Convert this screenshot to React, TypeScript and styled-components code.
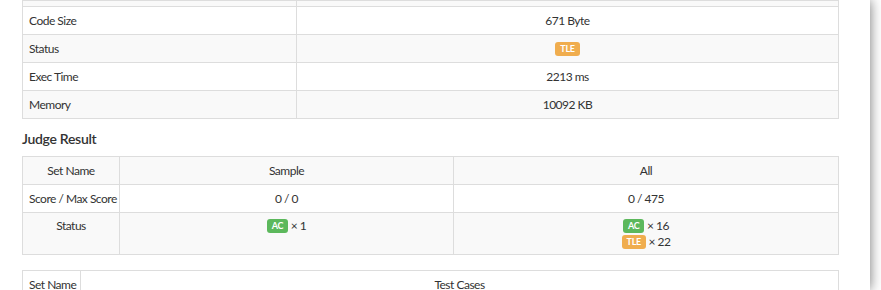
import React from "react"
import styled, { createGlobalStyle } from "styled-components"

const GlobalStyle = createGlobalStyle`
    html, body {
        margin: 0;
        padding: 0;
        background: #fff;
        overflow: hidden;
    }
    body {
        font-family: 'Lato', 'Noto Sans', sans-serif;
        font-size: 12px;
        letter-spacing: -0.5px;
        color: #333;
    }
`

const Page = styled.div`
    width: 870px;
    height: 290px;
    background: #fff;
    box-shadow: 0 0 12px rgba(0, 0, 0, 0.55);
    overflow: hidden;
`

const Content = styled.div`
    padding-left: 22px;
    width: 817px;
`

const Table = styled.table<{ $gap?: number }>`
    width: 817px;
    border-collapse: collapse;
    border-spacing: 0;
    table-layout: fixed;
    border: 1px solid #ddd;
    margin-bottom: ${p => p.$gap ?? 0}px;
`

const Row = styled.tr<{ $striped?: boolean }>`
    background: ${p => (p.$striped ? "#f9f9f9" : "#fff")};
`

const CutRow = styled.tr`
    background: #f9f9f9;
    td {
        height: 5px;
        padding: 0;
        border-top: none;
        border-right: 1px solid #ddd;
    }
`

const Cell = styled.td<{ $center?: boolean; $w?: string }>`
    box-sizing: border-box;
    padding: 5px 6px;
    line-height: 17px;
    border: 1px solid #ddd;
    text-align: ${p => (p.$center ? "center" : "left")};
    vertical-align: top;
    width: ${p => p.$w ?? "auto"};
    white-space: nowrap;
`

const StackCell = styled(Cell)`
    line-height: 16px;
    padding-bottom: 4px;
`

const Heading = styled.h4`
    margin: 10px 0 7px;
    font-size: 14px;
    line-height: 20px;
    font-weight: 600;
    letter-spacing: -0.3px;
    color: #333;
`

const Badge = styled.span<{ $kind: "AC" | "TLE" }>`
    display: inline-block;
    height: 14px;
    line-height: 14px;
    padding: 0 5px;
    border-radius: 3px;
    font-size: 9px;
    font-weight: 700;
    letter-spacing: -0.3px;
    color: #fff;
    vertical-align: 1px;
    background: ${p => (p.$kind === "AC" ? "#5cb85c" : "#f0ad4e")};
`

const Line = styled.div``

const infoRows = [
    { label: "Code Size", value: "671 Byte" },
    { label: "Status", badge: "TLE" as const },
    { label: "Exec Time", value: "2213 ms" },
    { label: "Memory", value: "10092 KB" },
]

export default function App() {
    return <>
        <GlobalStyle />
        <Page>
            <Content>
                <Table>
                    <tbody>
                        <CutRow>
                            <td style={{ width: "273px" }} />
                            <td />
                        </CutRow>
                        {infoRows.map((r, i) => (
                            <Row key={r.label} $striped={i % 2 === 1}>
                                <Cell>{r.label}</Cell>
                                <Cell $center>
                                    {r.badge ? <Badge $kind={r.badge}>{r.badge}</Badge> : r.value}
                                </Cell>
                            </Row>
                        ))}
                    </tbody>
                </Table>

                <Heading>Judge Result</Heading>

                <Table $gap={15}>
                    <tbody>
                        <Row $striped>
                            <Cell $center $w="97px">Set Name</Cell>
                            <Cell $center $w="334px">Sample</Cell>
                            <Cell $center>All</Cell>
                        </Row>
                        <Row>
                            <Cell $center>Score / Max Score</Cell>
                            <Cell $center>0 / 0</Cell>
                            <Cell $center>0 / 475</Cell>
                        </Row>
                        <Row $striped>
                            <StackCell $center>Status</StackCell>
                            <StackCell $center>
                                <Line><Badge $kind="AC">AC</Badge> × 1</Line>
                            </StackCell>
                            <StackCell $center>
                                <Line><Badge $kind="AC">AC</Badge> × 16</Line>
                                <Line><Badge $kind="TLE">TLE</Badge> × 22</Line>
                            </StackCell>
                        </Row>
                    </tbody>
                </Table>

                <Table>
                    <tbody>
                        <Row>
                            <Cell $center $w="58px">Set Name</Cell>
                            <Cell $center>Test Cases</Cell>
                        </Row>
                    </tbody>
                </Table>
            </Content>
        </Page>
    </>
}
